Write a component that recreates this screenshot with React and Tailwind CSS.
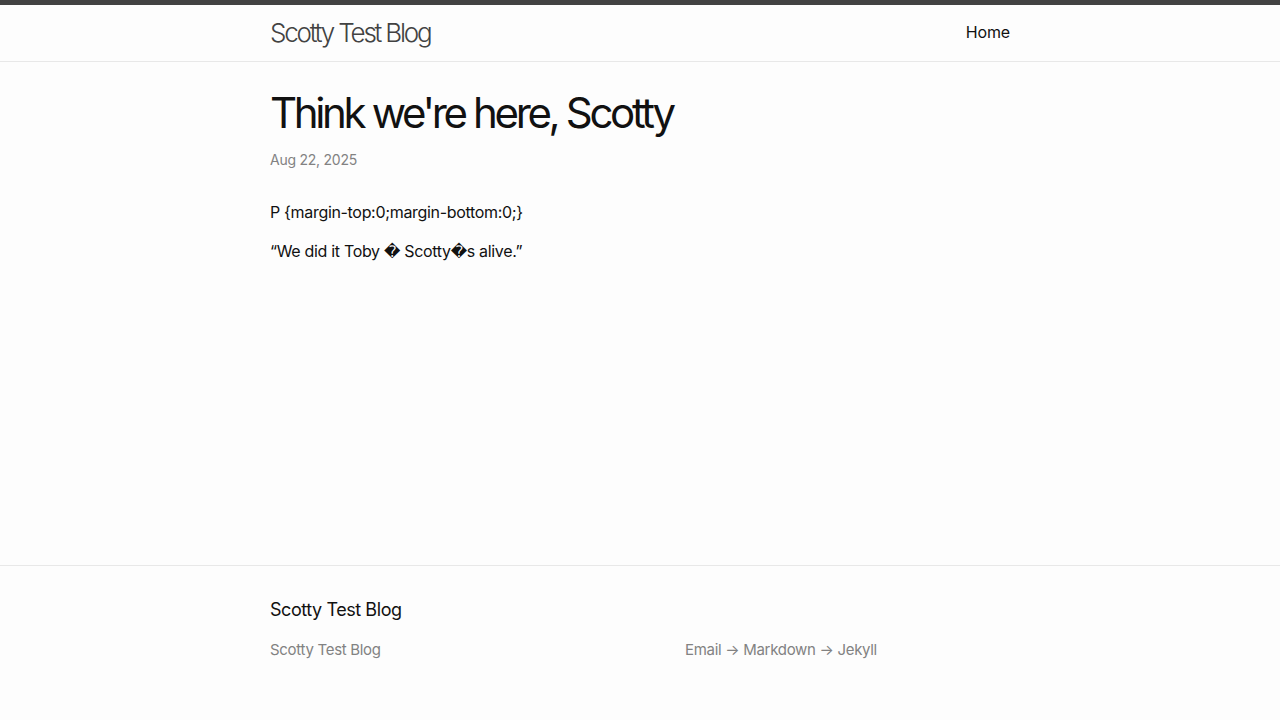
export default function App() {
  const font = { fontFamily: 'Inter, "Liberation Sans", "DejaVu Sans", sans-serif' };
  return (
    <div className="min-h-screen flex flex-col bg-[#fdfdfd] text-[#111111]" style={font}>
      <header className="border-t-[5px] border-t-[#424242] border-b border-b-[#e8e8e8] h-[62px]">
        <div className="w-[740px] mx-auto flex items-center justify-between h-[56px]">
          <a className="text-[26px] font-light tracking-[-2.2px] text-[#424242] leading-[54px]">Scotty Test Blog</a>
          <nav className="-mt-[2px]">
            <a className="text-[16px] leading-6 tracking-[-0.15px] text-[#111111]">Home</a>
          </nav>
        </div>
      </header>
      <main className="flex-1 pt-[30px]">
        <div className="w-[740px] mx-auto">
          <div className="mb-[30px]">
            <h1 className="text-[42px] leading-none tracking-[-3.35px] font-normal text-[#111111]">Think we're here, Scotty</h1>
            <p className="text-[14px] text-[#828282] mt-[15px] leading-[21px] tracking-[-0.25px]">Aug 22, 2025</p>
          </div>
          <div className="text-[16px] leading-6 tracking-[-0.32px]">
            <p className="mb-[15px]">P {"{margin-top:0;margin-bottom:0;}"}</p>
            <p className="mb-[15px]">“We did it Toby {"\uFFFD"} Scotty{"\uFFFD"}s alive.”</p>
          </div>
        </div>
      </main>
      <footer className="border-t border-[#e8e8e8] h-[155px] pt-[30px]">
        <div className="w-[740px] mx-auto">
          <h2 className="text-[18px] leading-[27px] mb-[16px] font-normal tracking-[-0.44px] text-[#111111]">Scotty Test Blog</h2>
          <div className="flex text-[15px] leading-[22.5px] tracking-[-0.3px] text-[#828282]">
            <div className="w-[415px]">Scotty Test Blog</div>
            <div>Email → Markdown → Jekyll</div>
          </div>
        </div>
      </footer>
    </div>
  );
}
